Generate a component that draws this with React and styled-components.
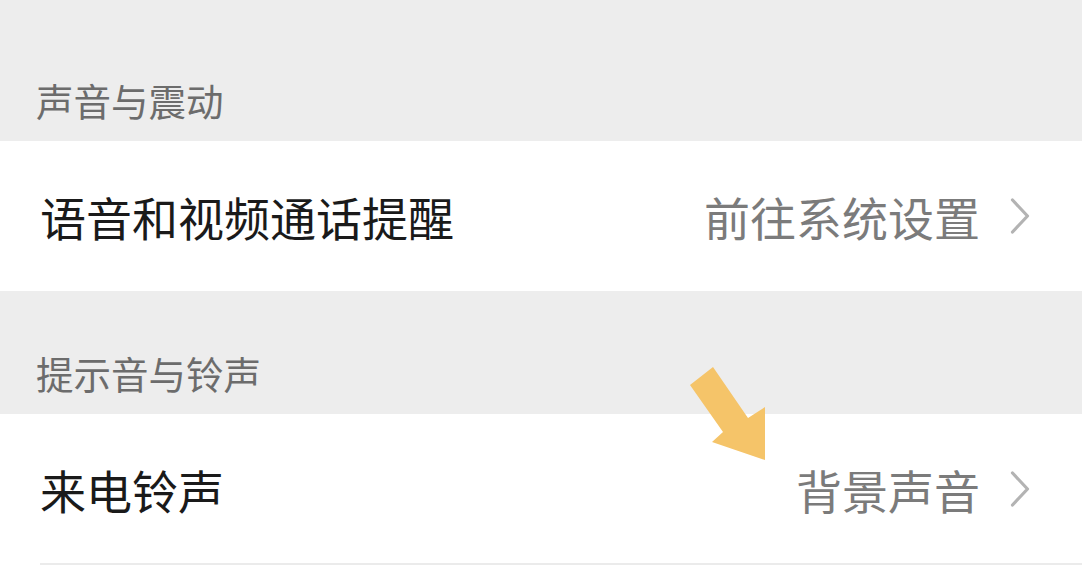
import React from "react";
import styled, { createGlobalStyle } from "styled-components";

const Global = createGlobalStyle`
  html, body { margin: 0; padding: 0; background: #ffffff; }
  body { font-family: "Noto Sans CJK SC", "Noto Sans", sans-serif; }
`;

const Page = styled.div`
  width: 1082px;
  height: 576px;
  overflow: hidden;
  background: #ffffff;
  display: flex;
  flex-direction: column;
  position: relative;
`;

const SectionHeader = styled.div`
  height: ${(p) => p.$h}px;
  box-sizing: border-box;
  background: #ededed;
  display: flex;
  align-items: flex-end;
  padding: 0 0 22px 36px;
  font-size: 37.5px;
  line-height: 38px;
  color: #6c6c6c;
  flex-shrink: 0;
`;

const Row = styled.div`
  height: ${(p) => p.$h}px;
  box-sizing: border-box;
  display: flex;
  align-items: center;
  padding: 0 52px 0 40px;
  background: #ffffff;
  flex-shrink: 0;
  position: relative;
`;

const Title = styled.div`
  flex: 1;
  font-size: 46px;
  line-height: 46px;
  color: #1a1a1a;
`;

const Value = styled.div`
  font-size: 46px;
  line-height: 46px;
  color: #7b7b7b;
  margin-right: 30px;
`;

const Divider = styled.div`
  height: 2px;
  margin-left: 40px;
  background: #ebebeb;
  flex-shrink: 0;
`;

const Chevron = () => (
  <svg width="20" height="36" viewBox="0 0 20 36" style={{ display: "block" }}>
    <path d="M2.5 2 L17.5 18 L2.5 34" fill="none" stroke="#b3b3b3" strokeWidth="3.2" strokeLinecap="round" strokeLinejoin="round" />
  </svg>
);

const ArrowMark = styled.svg`
  position: absolute;
  left: 0;
  top: 0;
  pointer-events: none;
`;

export default function App() {
  return (
    <Page>
      <Global />
      <SectionHeader $h={141}>声音与震动</SectionHeader>
      <Row $h={150}>
        <Title>语音和视频通话提醒</Title>
        <Value>前往系统设置</Value>
        <Chevron />
      </Row>
      <SectionHeader $h={123}>提示音与铃声</SectionHeader>
      <Row $h={149}>
        <Title>来电铃声</Title>
        <Value>背景声音</Value>
        <Chevron />
      </Row>
      <Divider />
      <ArrowMark width="1082" height="576" viewBox="0 0 1082 576">
        <polygon
          points="690,385 713,367 748,418 765,407 765,460 712,442 723,432"
          fill="#f5c469"
        />
      </ArrowMark>
    </Page>
  );
}
